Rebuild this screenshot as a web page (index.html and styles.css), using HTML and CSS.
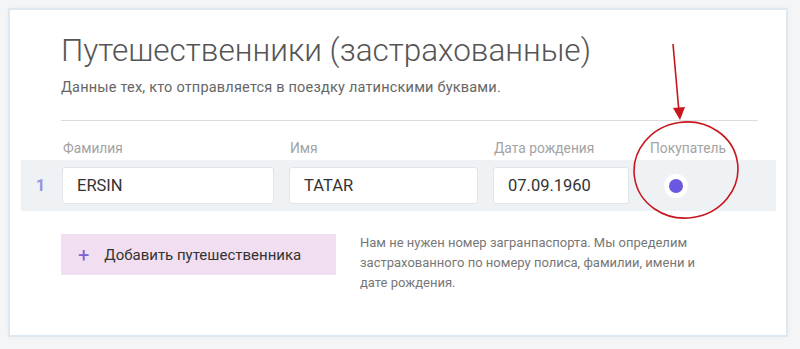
FILE: index.html
```html
<!DOCTYPE html>
<html lang="ru">
<head>
    <meta charset="UTF-8">
    <meta name="viewport" content="width=device-width, initial-scale=1.0">
    <title>Путешественники</title>
    <link rel="stylesheet" href="styles.css">
</head>
<body>
    <section class="card">
        <h1 class="title">Путешественники (застрахованные)</h1>
        <p class="subtitle">Данные тех, кто отправляется в поездку латинскими буквами.</p>
        <div class="divider"></div>

        <div class="grid labels">
            <span class="label">Фамилия</span>
            <span class="label">Имя</span>
            <span class="label">Дата рождения</span>
            <span class="label buyer-label">Покупатель</span>
        </div>

        <div class="traveler-row">
            <span class="num">1</span>
            <div class="grid">
                <input class="field" type="text" value="ERSIN">
                <input class="field" type="text" value="TATAR">
                <input class="field" type="text" value="07.09.1960">
                <div class="buyer">
                    <span class="radio"><span class="radio-dot"></span></span>
                </div>
            </div>
        </div>

        <div class="footer">
            <button class="add-btn" type="button"><span class="plus">+</span>Добавить путешественника</button>
            <p class="note">Нам не нужен номер загранпаспорта. Мы определим застрахованного по номеру полиса, фамилии, имени и дате рождения.</p>
        </div>

        <!-- annotation over the buyer column -->
        <svg class="mark" width="140" height="210" viewBox="0 0 140 210">
            <line x1="47" y1="34" x2="53" y2="102" stroke="#c8161e" stroke-width="1.6"/>
            <polygon points="47,98 59,97 54,110" fill="#c8161e"/>
            <ellipse cx="60" cy="160" rx="52" ry="48" fill="none" stroke="#c8161e" stroke-width="1.6" transform="rotate(-8 60 160)"/>
        </svg>
    </section>
</body>
</html>
```

FILE: styles.css
```css
body {
    margin: 0;
    padding: 8px;
    background: #f4f5f6;
    font-family: Roboto, "Noto Sans", sans-serif;
}
.card {
    position: relative;
    box-sizing: border-box;
    width: 780px;
    height: 329px;
    background: #fff;
    border: 2px solid #dde8f1;
    box-shadow: 0 0 6px rgba(0, 0, 0, 0.04);
    padding: 0 10px;
}
.title {
    margin: 0;
    padding: 19px 0 0 41px;
    font-size: 31.5px;
    font-weight: 300;
    line-height: 44px;
    color: #555;
}
.subtitle {
    margin: 6px 0 0 41px;
    font-size: 14.5px;
    letter-spacing: 0.2px;
    line-height: 18px;
    color: #666;
}
.divider {
    margin: 23px 18px 0 41px;
    height: 1px;
    background: #dcdcdc;
}
.grid {
    display: grid;
    grid-template-columns: 212px 189px 136px 1fr;
    column-gap: 15px;
}
.labels {
    padding: 19px 0 0 42px;
    height: 20px;
}
.label {
    font-size: 13.8px;
    line-height: 16px;
    color: #a3a3a3;
    padding-left: 1px;
}
.buyer-label {
    padding-left: 6px;
}
.traveler-row {
    display: flex;
    align-items: center;
    background: #eef2f5;
    height: 51px;
    margin-left: 1px;
}
.num {
    width: 41px;
    padding-left: 15px;
    box-sizing: border-box;
    font-size: 16px;
    font-weight: 700;
    color: #9d8fdc;
}
.traveler-row .grid {
    flex: 1;
    align-items: center;
}
.field {
    box-sizing: border-box;
    height: 37px;
    padding: 0 14px;
    border: 1px solid #e1e4e8;
    border-radius: 3px;
    background: #fff;
    font-family: Roboto, "Noto Sans", sans-serif;
    font-size: 16.5px;
    color: #333;
    outline: none;
}
.buyer {
    padding-left: 20px;
}
.radio {
    display: flex;
    align-items: center;
    justify-content: center;
    width: 24px;
    height: 24px;
    border-radius: 50%;
    background: #fff;
}
.radio-dot {
    width: 14px;
    height: 14px;
    border-radius: 50%;
    background: #6a58e0;
}
.footer {
    display: flex;
    align-items: flex-start;
    padding: 23px 0 0 41px;
}
.add-btn {
    display: flex;
    align-items: center;
    width: 275px;
    height: 41px;
    padding: 0 0 0 17px;
    border: none;
    background: #f1dff1;
    font-family: Roboto, "Noto Sans", sans-serif;
    font-size: 15px;
    color: #333;
    cursor: pointer;
}
.plus {
    color: #7b5fd8;
    font-size: 20px;
    margin-right: 15px;
}
.note {
    margin: -1px 0 0 24px;
    width: 360px;
    font-size: 13px;
    line-height: 20px;
    color: #777;
}
.mark {
    position: absolute;
    left: 616px;
    top: 0;
}
```
